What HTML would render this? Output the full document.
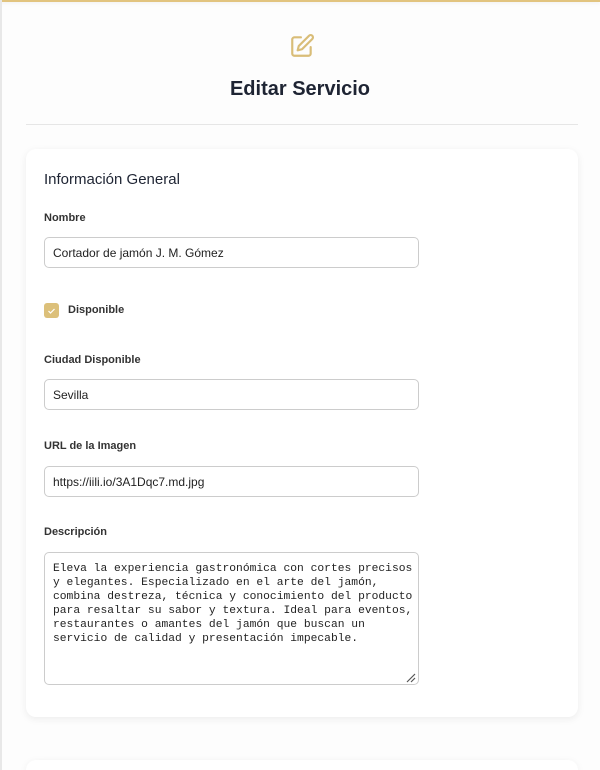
<!DOCTYPE html>
<html><head><meta charset="utf-8"><style>
*{box-sizing:border-box;margin:0;padding:0}
html,body{width:600px;height:770px;overflow:hidden}
body{background:#fdfdfd;font-family:"Liberation Sans",sans-serif;color:#222;position:relative}
.strip{position:absolute;left:0;top:0;width:2px;height:770px;background:#e8e8e8}
.top{position:absolute;left:0;top:0;width:600px;height:2px;background:#e2c47f;box-shadow:0 1px 4px rgba(0,0,0,.08)}
.icon{position:absolute;left:289px;top:33px}
h1{position:absolute;left:0;width:600px;top:78px;text-align:center;font-size:20px;font-weight:bold;color:#1e2433;font-family:"Liberation Sans",sans-serif}
.hr{position:absolute;left:26px;width:552px;top:124px;height:1px;background:#e6e6e6}
.card{position:absolute;left:26px;width:552px;top:149px;height:568px;background:#fff;border-radius:10px;box-shadow:0 2px 8px rgba(0,0,0,.07)}
.card2{top:760px;height:10px;border-radius:10px 10px 0 0}
.h2{position:absolute;left:44px;top:171px;font-size:15px;color:#1e2433;font-family:"Liberation Sans",sans-serif}
.lab{position:absolute;left:44px;font-size:11px;font-weight:bold;color:#333}
.inp{position:absolute;left:44px;width:375px;height:31px;border:1px solid #ccc;border-radius:5px;font-size:12px;padding:8px 8px;color:#222;background:#fff}
.cb{position:absolute;left:44px;top:303px;width:15px;height:15px;border-radius:3px;background:#dcc07a}
.ta{position:absolute;left:44px;top:552px;width:375px;height:133px;border:1px solid #ccc;border-radius:5px;font-family:"Liberation Mono",monospace;font-size:11.3px;line-height:14px;padding:9px 8px;white-space:pre;color:#222;background:#fff;overflow:hidden}
</style></head><body>
<div class="top"></div><div class="strip"></div>
<svg class="icon" width="26" height="26" viewBox="0 0 24 24" fill="none" stroke="#d9bd78" stroke-width="2" stroke-linecap="round" stroke-linejoin="round"><path d="M11 4H5a2 2 0 0 0-2 2v13a2 2 0 0 0 2 2h13a2 2 0 0 0 2-2v-6"/><path d="M18.5 2.5a2.1 2.1 0 0 1 3 3L12 15l-4 1 1-4 9.5-9.5z"/></svg>
<h1>Editar Servicio</h1>
<div class="hr"></div>
<div class="card"></div>
<div class="card card2"></div>
<div class="h2">Información General</div>
<div class="lab" style="top:212px">Nombre</div>
<div class="inp" style="top:237px">Cortador de jamón J. M. Gómez</div>
<div class="cb"><svg width="15" height="15" viewBox="0 0 15 15"><path d="M4.5 8l2 2 4-4" fill="none" stroke="#fff" stroke-width="1.2"/></svg></div>
<div class="lab" style="top:304px;left:68px">Disponible</div>
<div class="lab" style="top:354px">Ciudad Disponible</div>
<div class="inp" style="top:379px">Sevilla</div>
<div class="lab" style="top:440px">URL de la Imagen</div>
<div class="inp" style="top:466px">https://iili.io/3A1Dqc7.md.jpg</div>
<div class="lab" style="top:526px">Descripción</div>
<div class="ta">Eleva la experiencia gastronómica con cortes precisos
y elegantes. Especializado en el arte del jamón,
combina destreza, técnica y conocimiento del producto
para resaltar su sabor y textura. Ideal para eventos,
restaurantes o amantes del jamón que buscan un
servicio de calidad y presentación impecable.</div>
<svg style="position:absolute;left:405px;top:672px" width="12" height="12"><path d="M2 10L10 2M6 10L10 6" stroke="#555" stroke-width="1.2"/></svg>
</body></html>
